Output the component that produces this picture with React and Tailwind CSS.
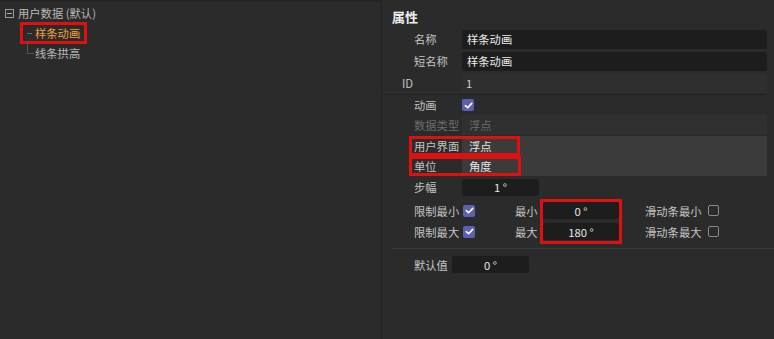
import React from "react";

const Check = ({ checked }) =>
  checked ? (
    <span className="flex h-[12px] w-[12px] items-center justify-center rounded-[2px] bg-[#5d5fb0]">
      <svg width="9" height="9" viewBox="0 0 10 10">
        <path d="M1.5 5.2 L4 7.5 L8.6 2.6" fill="none" stroke="#fff" strokeWidth="1.8" strokeLinecap="round" strokeLinejoin="round" />
      </svg>
    </span>
  ) : (
    <span className="block h-[11px] w-[11px] rounded-[2px] border border-[#8a8a8a] bg-[#2b2b2b]" />
  );

const Row = ({ label, h, children, labelClass = "text-[#c4c4c4]", indent = "pl-[32px]" }) => (
  <div className={`flex items-center ${h}`}>
    <div className={`${indent} w-[80px] shrink-0 whitespace-nowrap ${labelClass}`}>{label}</div>
    {children}
  </div>
);

const NumField = ({ value, w = "w-[77px]" }) => (
  <div className={`flex h-[17px] ${w} items-center justify-center rounded-[3px] bg-[#1d1d1d] text-[#e8e8e8]`}>
    {value}
  </div>
);

const App = () => {
  return (
    <div
      className="flex h-[339px] w-[774px] bg-[#2b2b2b] text-[11.3px] leading-[14px]"
      style={{ fontFamily: '"Noto Sans CJK SC", "Liberation Sans", sans-serif' }}
    >
      {/* Tree */}
      <div className="w-[382px] shrink-0 border-r border-[#222] border-t-2 border-t-[#242424] pt-[3px]">
        <div className="flex h-[16px] items-center whitespace-nowrap pl-[5px] text-[#b8b8b8]">
          <span className="relative mr-[4px] h-[9px] w-[9px] border border-[#9a9a9a]">
            <span className="absolute left-[1px] top-[3px] h-px w-[5px] bg-[#b0b0b0]" />
          </span>
          用户数据 (默认)
        </div>
        <div className="relative pl-[20px]">
          <div className="absolute left-[27px] top-[19px] h-[13px] w-px bg-[#555]" />
          <div className="mt-[1px] flex h-[22px] w-[67px] items-center whitespace-nowrap border-[3px] border-[#e01010]">
            <span className="ml-[4px] mr-[3px] h-px w-[5px] bg-[#666]" />
            <span className="text-[#f0a23a]">样条动画</span>
          </div>
          <div className="flex h-[18px] items-center whitespace-nowrap pl-[7px]">
            <span className="mr-[1px] h-px w-[7px] bg-[#555]" />
            <span className="text-[#b8b8b8]">线条拱高</span>
          </div>
        </div>
      </div>

      {/* Properties */}
      <div className="flex-1 pr-[7px]">
        <div className="h-[28px] pl-[10px] pt-[10px] text-[13px] font-bold text-[#f0f0f0]">属性</div>

        <Row label="名称" h="h-[22px]">
          <div className="flex h-[19px] flex-1 items-center rounded-[2px] bg-[#1d1d1d] pl-[5px] text-[#ececec]">样条动画</div>
        </Row>
        <Row label="短名称" h="h-[22px]">
          <div className="flex h-[19px] flex-1 items-center rounded-[2px] bg-[#1d1d1d] pl-[5px] text-[#ececec]">样条动画</div>
        </Row>
        <Row label="ID" h="h-[22px]" indent="pl-[20px]">
          <div className="flex h-[19px] flex-1 items-center bg-[#2f2f2f] pl-[4px] text-[#cfcfcf]">1</div>
        </Row>
        <div className="h-px bg-[#222]" />
        <Row label="动画" h="h-[20px]">
          <Check checked />
        </Row>
        <Row label="数据类型" h="h-[20px]" labelClass="text-[#6c6c6c]">
          <div className="flex h-[20px] flex-1 items-center bg-[#303030] pl-[7px] text-[#6c6c6c]">浮点</div>
        </Row>

        <div className="relative mt-[1px]">
          <Row label="用户界面" h="h-[20px]">
            <div className="flex h-[20px] flex-1 items-center bg-[#3b3b3b] pl-[7px] text-[#e4e4e4]">浮点</div>
          </Row>
          <Row label="单位" h="h-[20px]">
            <div className="flex h-[20px] flex-1 items-center bg-[#3b3b3b] pl-[7px] text-[#e4e4e4]">角度</div>
          </Row>
          <div className="absolute left-[27px] top-[0px] h-[20px] w-[111px] border-[3px] border-[#e01010]" />
          <div className="absolute left-[27px] top-[20px] h-[20px] w-[112px] border-[3px] border-[#e01010]" />
        </div>

        <Row label="步幅" h="h-[22px]">
          <NumField value="1 °" />
        </Row>

        <div className="relative mt-[2px]">
          <div className="flex h-[21px] items-center whitespace-nowrap">
            <div className="w-[81px] shrink-0 pl-[32px] text-[#c4c4c4]">限制最小</div>
            <Check checked />
            <div className="ml-[40px] w-[28px] text-[#c4c4c4]">最小</div>
            <NumField value="0 °" w="w-[76px]" />
            <div className="ml-[26px] text-[#c4c4c4]">滑动条最小</div>
            <span className="ml-[6px]"><Check /></span>
          </div>
          <div className="flex h-[21px] items-center whitespace-nowrap">
            <div className="w-[81px] shrink-0 pl-[32px] text-[#c4c4c4]">限制最大</div>
            <Check checked />
            <div className="ml-[40px] w-[28px] text-[#c4c4c4]">最大</div>
            <NumField value="180 °" w="w-[76px]" />
            <div className="ml-[26px] text-[#c4c4c4]">滑动条最大</div>
            <span className="ml-[6px]"><Check /></span>
          </div>
          <div className="absolute left-[158px] top-[-1px] h-[45px] w-[82px] border-[3px] border-[#e01010]" />
        </div>

        <div className="ml-[9px] mt-[6px] mr-[-7px] h-px bg-[#3a3a3a]" />

        <div className="mt-[7px] flex h-[17px] items-center">
          <div className="w-[70px] shrink-0 whitespace-nowrap pl-[32px] text-[#c4c4c4]">默认值</div>
          <NumField value="0 °" />
        </div>
      </div>
    </div>
  );
};

export default App;
